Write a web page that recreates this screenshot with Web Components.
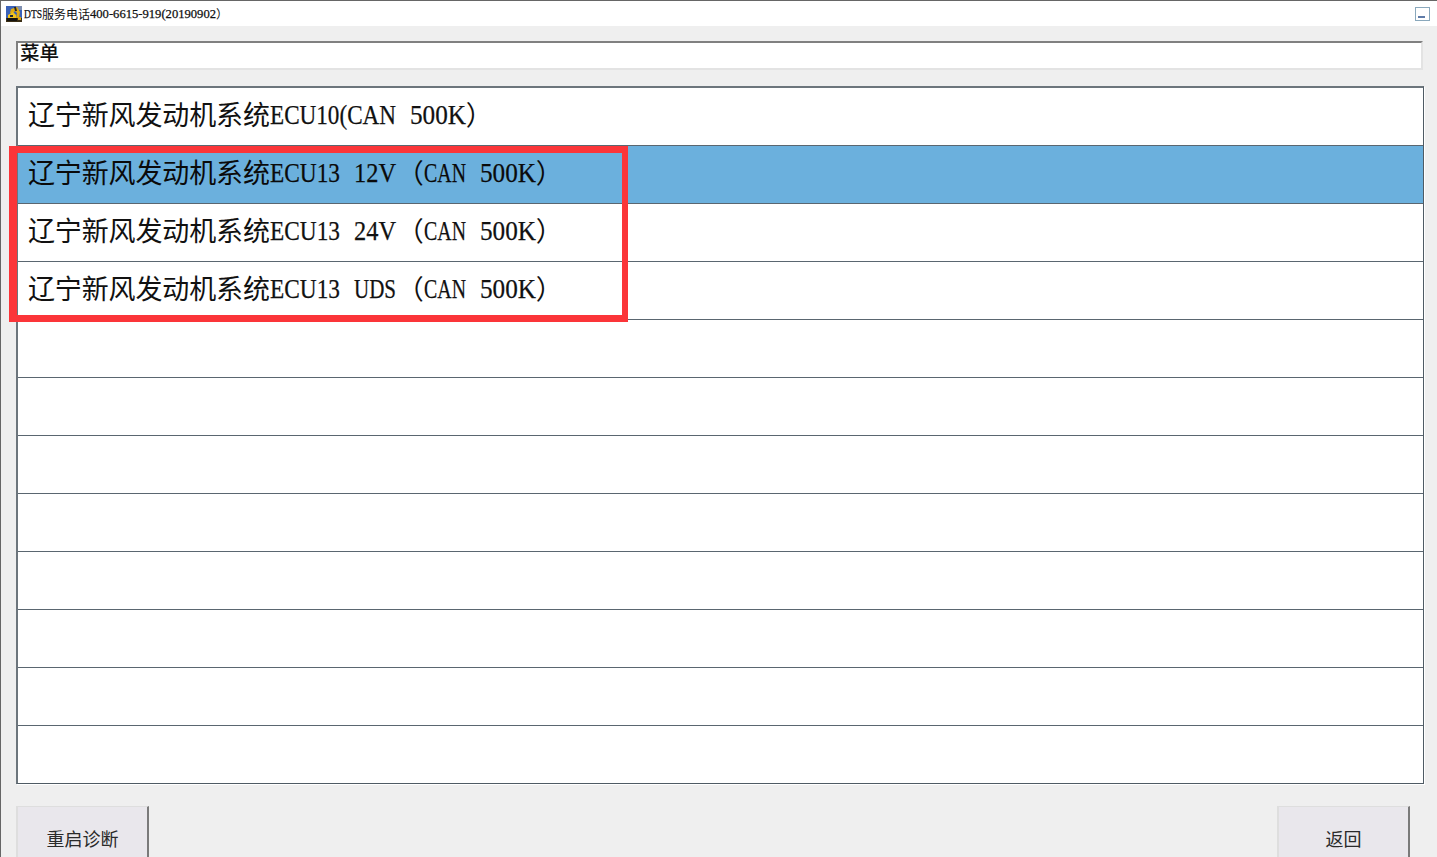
<!DOCTYPE html>
<html lang="zh-CN"><head><meta charset="utf-8"><title>DTS</title>
<style>html,body{margin:0;padding:0;background:#efefef}</style></head>
<body>
<dts-window>
  <dts-titlebar slot="title" text="DTS服务电话400-6615-919(20190902）"></dts-titlebar>
  <dts-menu-header slot="header" text="菜单"></dts-menu-header>
  <dts-list slot="list">
    <dts-row text="辽宁新风发动机系统ECU10(CAN 500K）"></dts-row>
    <dts-row selected text="辽宁新风发动机系统ECU13 12V（CAN 500K）"></dts-row>
    <dts-row text="辽宁新风发动机系统ECU13 24V（CAN 500K）"></dts-row>
    <dts-row text="辽宁新风发动机系统ECU13 UDS（CAN 500K）"></dts-row>
    <dts-row></dts-row><dts-row></dts-row><dts-row></dts-row><dts-row></dts-row>
    <dts-row></dts-row><dts-row></dts-row><dts-row></dts-row><dts-row></dts-row>
  </dts-list>
  <dts-button slot="left" text="重启诊断"></dts-button>
  <dts-button slot="right" text="返回"></dts-button>
  <dts-highlight slot="overlay"></dts-highlight>
</dts-window>
<script>
function define(name, css, html){
  customElements.define(name, class extends HTMLElement{
    constructor(){super();this.attachShadow({mode:'open'});}
    connectedCallback(){
      const t=document.createElement('template');
      t.innerHTML='<style>'+css+'</style>'+(typeof html==='function'?html(this):html);
      this.shadowRoot.replaceChildren(t.content.cloneNode(true));
    }
  });
}
const esc=s=>s.replace(/&/g,'&amp;').replace(/</g,'&lt;');
const ctx=document.createElement('canvas').getContext('2d');
function latinWord(word,size,cell){
  const box=word.length*cell;
  if(!word.trim()) return `<span class="w" style="width:${box}px"> </span>`;
  ctx.font=`${size}px "Liberation Serif"`;
  const natural=ctx.measureText(word).width;
  const k=(box/natural).toFixed(4);
  return `<span class="w" style="width:${box}px"><span class="s" style="transform:translateY(-1px) scaleX(${k})">${esc(word)}</span></span>`;
}
define('mix-text',
  `:host{display:inline-block;white-space:pre;color:inherit;line-height:1;font-family:"Liberation Serif",serif}
   .c{font-family:"Noto Sans CJK SC",sans-serif}
   .w{display:inline-block}
   .s{display:inline-block;transform-origin:0 50%;-webkit-text-stroke:.25px currentColor}`,
  el=>{
    const size=parseFloat(el.getAttribute('size'));
    const cell=Math.ceil(size/2);
    const big=size===27;
    const parts=(el.getAttribute('text')||'').match(/[（）]|[\u2E80-\uFFEF]+|[^\u2E80-\uFFEF]+/g)||[];
    return `<span style="font-size:${size}px">`+parts.map(p=>{
      if(p==='（'||p==='）'){
        const pad=big&&p==='（'?'padding-left:1px;':'';
        return `<span class="c" style="${pad}">${p}</span>`;
      }
      if(/^[\u2E80-\uFFEF]/.test(p))
        return `<span class="c" style="${big?'letter-spacing:-.14px':''}">${esc(p)}</span>`;
      return p.split(/( +)/).filter(Boolean).map(w=>latinWord(w,size,cell)).join('');
    }).join('')+`</span>`;
  });
define('dts-window',
  `:host{display:flex;flex-direction:column;position:relative;width:1437px;height:857px;overflow:hidden;background:#efefef;box-sizing:border-box;border-left:1px solid #666;border-top:1px solid #666}
   .top{flex:none}
   .main{flex:none;display:flex;flex-direction:column;padding:15px 12px 0 15px}
   .gap{height:16px}
   .foot{display:flex;justify-content:space-between;margin-top:22px;padding-right:15px}`,
  `<div class="top"><slot name="title"></slot></div>
   <div class="main"><slot name="header"></slot><div class="gap"></div><slot name="list"></slot>
   <div class="foot"><slot name="left"></slot><slot name="right"></slot></div></div>
   <slot name="overlay"></slot>`);
define('dts-titlebar',
  `:host{display:flex;align-items:center;height:25px;background:#fff;padding:0 7px 0 5px;color:#111}
   svg{width:16px;height:16px;margin-right:2px;flex:none}
   mix-text{flex:1}
   .min{width:15px;height:14px;box-sizing:border-box;border:1px solid #8aa8bc;display:flex;align-items:flex-end;padding:0 0 2px 2px;flex:none}
   .min i{display:block;width:7px;height:2px;background:#5f7ba8}`,
  el=>`<svg viewBox="0 0 16 16" aria-hidden="true">
     <rect width="16" height="16" fill="#3a62b8"/>
     <rect x="10" y="0" width="6" height="4" fill="#7f8fb0"/>
     <rect y="12" width="16" height="4" fill="#3c2f16"/>
     <path d="M5 3 11 1 14 6 13 12 10 12 11 7 9 5 7 7 4 7Z" fill="#e0ab12"/>
     <path d="M2 9 7 6 10 9 10 13 2 13Z" fill="#f2c41c"/>
     <path d="M1 12H11V15H1Z" fill="#15130e"/>
     <path d="M8 1 10 1 11 5 9 5Z" fill="#2a2620"/>
     <path d="M4 9H7V11H4Z" fill="#222a36"/>
     <path d="M12 11H15V14H12Z" fill="#d9a512"/>
   </svg>
   <mix-text size="12" text="${el.getAttribute('text')}"></mix-text>
   <div class="min"><i></i></div>`);
define('dts-menu-header',
  `:host{display:block;height:29px;box-sizing:border-box;width:1407px;background:#fff;border-style:solid;border-width:2px;border-color:#808080 #e3e3e3 #e3e3e3 #808080;color:#111;font-weight:500;padding:0 0 0 2px}
   mix-text{display:block;line-height:18px}`,
  el=>`<mix-text size="19.5" text="${el.getAttribute('text')}"></mix-text>`);
define('dts-list',
  `:host{display:block;width:1408px;box-sizing:border-box;background:#fff;border-style:solid;border-width:2px 1px 1px 2px;border-color:#6c757c #4f5b64 #4f5b64 #6c757c;box-shadow:1px 1px 0 #fff}
   ::slotted(dts-row:last-child){border-bottom:0;height:57px}`,
  `<slot></slot>`);
define('dts-row',
  `:host{display:flex;align-items:center;height:58px;box-sizing:border-box;border-bottom:1px solid #5a6670;background:#fff;padding:0 0 3px 10px;color:#111}
   :host([selected]){background:#6bb0dd;color:#0a0a0a}`,
  el=>{const t=el.getAttribute('text');return t?`<mix-text size="27" text="${t}"></mix-text>`:'';});
define('dts-button',
  `:host{display:flex;justify-content:center;align-items:flex-start;width:133px;height:60px;box-sizing:border-box;background:#e9e7ec;border-style:solid;border-width:1px 2px 0 2px;border-color:#dedede #7a7a7a #dedede #dedede;color:#2a2a2a;padding-top:22px}`,
  el=>`<mix-text size="18" text="${el.getAttribute('text')}"></mix-text>`);
define('dts-highlight',
  `:host{display:block;position:absolute;left:8px;top:145px;width:619px;height:176px;box-sizing:border-box;border-style:solid;border-color:#fb3539;border-width:7px 6px 7px 8px;pointer-events:none}`,
  ``);
</script>
</body></html>
